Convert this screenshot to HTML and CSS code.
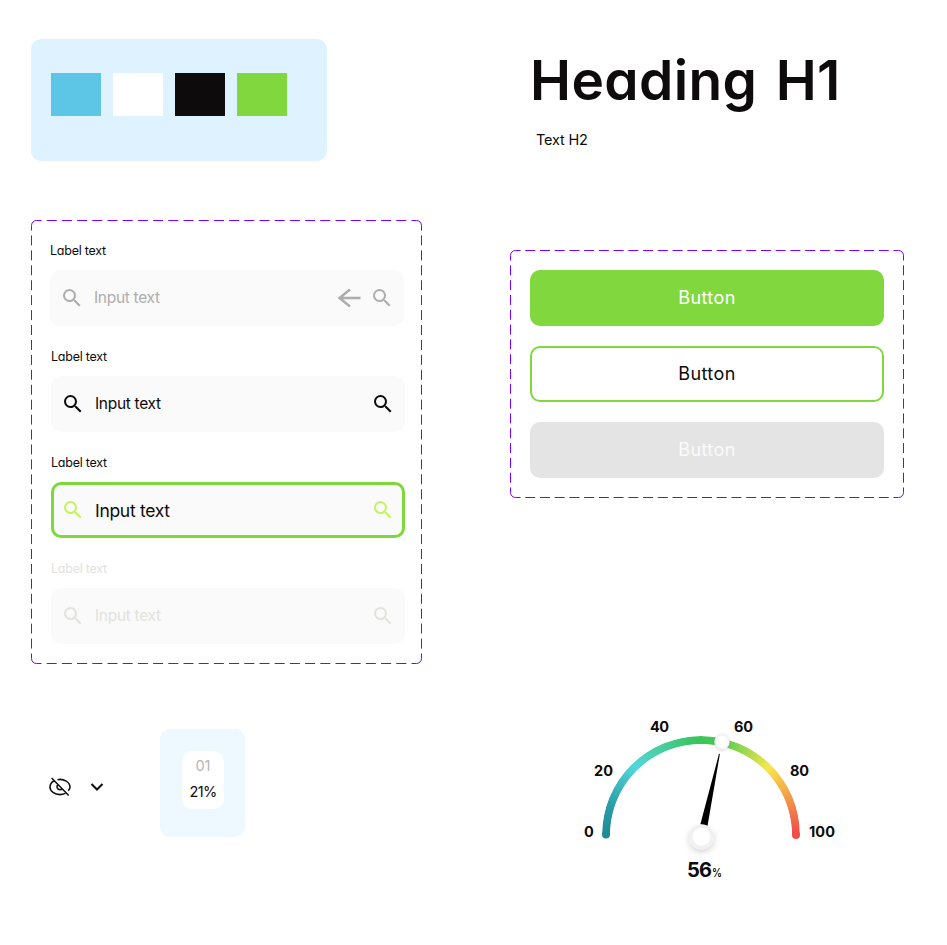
FILE: index.html
```html
<!DOCTYPE html>
<html lang="en">
<head>
<meta charset="utf-8">
<title>UI kit</title>
<link rel="stylesheet" href="styles.css">
</head>
<body>
<svg width="0" height="0" class="defs">
  <symbol id="search" viewBox="0 0 24 24"><path d="M15.5 14h-.79l-.28-.27A6.47 6.47 0 0 0 16 9.5 6.5 6.5 0 1 0 9.5 16c1.61 0 3.09-.59 4.23-1.57l.27.28v.79l5 4.99L20.49 19l-4.99-5zm-6 0C7.01 14 5 11.99 5 9.5S7.01 5 9.5 5 14 7.01 14 9.5 11.99 14 9.5 14z" fill="currentColor"/></symbol>
</svg>
<main class="page">
  <div class="col-left">
    <section class="palette">
      <div class="swatch sky"></div><div class="swatch white"></div><div class="swatch black"></div><div class="swatch green"></div>
    </section>
    <section class="panel inputs">
      <svg class="frame" width="391" height="444" fill="none">
        <path d="M5.5 .5H385.5M5.5 443.5H385.5" stroke-dasharray="10 5.2" stroke-dashoffset="5"/>
        <path d="M.5 5.5V438.5M390.5 5.5V438.5" stroke-dasharray="10 4.931" stroke-dashoffset="5"/>
        <path d="M.5 5.5a5 5 0 0 1 5-5M385.5 .5a5 5 0 0 1 5 5M390.5 438.5a5 5 0 0 1-5 5M5.5 443.5a5 5 0 0 1-5-5"/>
      </svg>
      <div class="field placeholder">
        <label>Label text</label>
        <div class="box"><svg class="ico"><use href="#search"/></svg><span>Input text</span>
          <svg class="arrow" viewBox="0 0 24 20" fill="none" stroke="currentColor" stroke-width="2.500"><path d="M23.500 10H2.500M13 1.500L2.500 10 13 18.500"/></svg>
          <svg class="ico"><use href="#search"/></svg></div>
      </div>
      <div class="field">
        <label>Label text</label>
        <div class="box"><svg class="ico"><use href="#search"/></svg><span>Input text</span><svg class="ico"><use href="#search"/></svg></div>
      </div>
      <div class="field focused">
        <label>Label text</label>
        <div class="box"><svg class="ico"><use href="#search"/></svg><span>Input text</span><svg class="ico"><use href="#search"/></svg></div>
      </div>
      <div class="field disabled">
        <label>Label text</label>
        <div class="box"><svg class="ico"><use href="#search"/></svg><span>Input text</span><svg class="ico"><use href="#search"/></svg></div>
      </div>
    </section>
    <section class="extras">
      <svg class="eye" width="24" height="24" viewBox="0 0 24 24" fill="none" stroke="#111" stroke-width="1.600"><path d="M3.600 3L20.700 20.500M9.500 4.700C16 3.300 22 7.500 22 12c0 1.500-.7 2.700-1.700 3.800M5.800 6C3.500 7.400 2 9.600 2 12c0 4.300 4.600 7.600 10 7.600 2 0 3.800-.5 5.300-1.200M9.800 9.500c-2 2.300-.3 5.200 2.200 5.200 1 0 1.800-.4 2.400-1"/></svg>
      <svg class="chev" width="14" height="10" viewBox="0 0 14 10" fill="none" stroke="#111" stroke-width="2.100"><path d="M1.500 2L7 7.500 12.500 2"/></svg>
      <div class="stat"><div class="stat-in"><span class="no">01</span><span class="pct">21%</span></div></div>
    </section>
  </div>
  <div class="col-right">
    <h1>Heading H1</h1>
    <h2>Text H2</h2>
    <section class="panel buttons">
      <svg class="frame" width="394" height="248" fill="none">
        <path d="M5.500 .5H388.500M5.500 247.500H388.500" stroke-dasharray="10 4.731" stroke-dashoffset="5"/>
        <path d="M.5 5.500V242.500M393.500 5.500V242.500" stroke-dasharray="10 4.813" stroke-dashoffset="5"/>
        <path d="M.5 5.500a5 5 0 0 1 5-5M388.500 .5a5 5 0 0 1 5 5M393.500 242.500a5 5 0 0 1-5 5M5.500 247.500a5 5 0 0 1-5-5"/>
      </svg>
      <button class="primary">Button</button>
      <button class="outline">Button</button>
      <button class="off">Button</button>
    </section>
    <section class="gauge">
      <div class="arc"></div>
      <svg width="270" height="180" viewBox="575 710 270 180">
        <defs>
          <filter id="sh" x="-50%" y="-50%" width="200%" height="200%"><feDropShadow dx="0" dy="3" stdDeviation="3" flood-color="#000" flood-opacity=".16"/></filter>
          <filter id="sh2" x="-50%" y="-50%" width="200%" height="200%"><feDropShadow dx="0" dy=".5" stdDeviation=".8" flood-color="#000" flood-opacity=".22"/></filter>
          <radialGradient id="knob"><stop offset=".65" stop-color="#fff"/><stop offset="1" stop-color="#eeeef0"/></radialGradient>
        </defs>
        <circle cx="606" cy="834.500" r="4" fill="#1f8b92"/>
        <circle cx="796" cy="835" r="4" fill="#f04f49"/>
        <path d="M719 753.800L719.900 754 707.500 826 700.300 824.500z"/>
        <circle cx="722" cy="742" r="7.700" fill="url(#knob)" filter="url(#sh2)"/>
        <circle cx="701.500" cy="836.700" r="12.500" fill="#f1f1f3" filter="url(#sh)"/>
        <circle cx="701.500" cy="836.700" r="9" fill="#fff"/>
        <g class="ticks">
          <text x="584" y="837" textLength="10">0</text>
          <text x="594" y="776" textLength="19">20</text>
          <text x="650" y="732" textLength="19">40</text>
          <text x="734" y="732" textLength="19">60</text>
          <text x="790" y="776" textLength="19">80</text>
          <text x="809" y="837" textLength="26">100</text>
        </g>
        <text class="value" x="687" y="877" textLength="25">56</text>
        <text class="unit" x="712" y="877" textLength="10" lengthAdjust="spacingAndGlyphs">%</text>
      </svg>
    </section>
  </div>
</main>
</body>
</html>
```
FILE: styles.css
```css
* { box-sizing: border-box; margin: 0; padding: 0; }
body { background: #fff; color: #0d0b0c; font-family: Inter, "Liberation Sans", sans-serif; font-feature-settings: "cv11"; }
.defs { display: block; }
.page { display: grid; grid-template-columns: 479px 394px; padding-left: 31px; height: 945px; overflow: hidden; }
.col-left { padding-top: 39px; }
.palette { width: 296px; height: 122px; border-radius: 10px; background: #def2ff; padding: 34px 20px; display: flex; gap: 12px; }
.swatch { width: 50px; height: 42.8px; }
.sky { background: #5dc5e5; }
.white { background: #fff; }
.black { background: #0d0b0c; }
.green { background: #80d83e; }
.panel { position: relative; }
.frame { position: absolute; left: 0; top: 0; stroke: #7b00ff; }
.inputs { margin-top: 59px; width: 391px; height: 444px; padding: 20px 17px 0 20px; display: flex; flex-direction: column; gap: 20px; }
.field { width: 354px; height: 86px; }
.placeholder { margin-left: -1px; }
.field label { display: block; height: 30px; line-height: 22px; font-size: 12.5px; letter-spacing: -.25px; }
.box { height: 56px; border-radius: 10px; background: #fafafa; padding: 0 10px; display: flex; align-items: center; }
.box span { flex: 1; margin-left: 10px; padding-bottom: 2px; font-size: 15.5px; letter-spacing: -.3px; }
.ico { width: 24px; height: 24px; }
.arrow { width: 24px; height: 20px; margin-right: 9px; }
.placeholder .box { color: #adadad; }
.focused .box { border: 3px solid #7dd83c; padding: 0 7px; }
.focused .ico { color: #c3f55a; }
.focused span { font-size: 17.5px; padding-bottom: 0; letter-spacing: -.3px; }
.disabled { color: #e2e2de; }
.extras { margin-top: 65px; display: flex; align-items: flex-start; }
.eye { margin: 46px 0 0 17px; }
.chev { margin: 53px 0 0 18px; }
.stat { margin-left: 56px; width: 85px; height: 108px; border-radius: 10px; background: #edf8ff; padding: 22px; }
.stat-in { width: 42px; height: 58px; border-radius: 10px; background: #fff; display: flex; flex-direction: column; align-items: center; padding-top: 2px; font-size: 14.5px; }
.stat-in span { height: 26px; line-height: 26px; }
.no { color: #b5b5b5; }
.pct { letter-spacing: -.7px; }
h1 { margin: 47px 0 0 20px; height: 67px; line-height: 67px; font-size: 55px; font-weight: 600; letter-spacing: .4px; word-spacing: 4px; white-space: nowrap; }
h2 { margin: 15px 0 0 26px; height: 22px; line-height: 22px; font-size: 14.5px; font-weight: 400; letter-spacing: -.2px; }
.buttons { margin-top: 99px; height: 248px; padding: 20px; display: flex; flex-direction: column; gap: 20px; }
button { height: 56px; border: 0; border-radius: 10px; font: inherit; font-size: 18px; letter-spacing: .4px; color: #fff; padding-bottom: 2px; }
.primary { background: #80d83e; }
.outline { background: #fff; border: 2px solid #80d83e; color: #0d0b0c; }
.off { background: #e4e4e4; color: #fafafa; }
.gauge { position: relative; margin: 212px 0 0 65px; width: 270px; height: 180px; }
.gauge svg { position: relative; display: block; }
.arc { position: absolute; left: 27px; top: 26px; width: 198px; height: 99px; overflow: hidden; border-radius: 99px 99px 0 0; background: conic-gradient(from 270deg at 50% 100%, #1f8b92 0deg, #2a9da6 18deg, #54d6dc 46deg, #39c459 88deg, #4dcb55 102deg, #f8e74a 135deg, #f04f49 178deg); -webkit-mask: radial-gradient(circle at 50% 100%, transparent 90.600px, #000 91.400px); mask: radial-gradient(circle at 50% 100%, transparent 90.600px, #000 91.400px); }
.ticks { font-size: 14.500px; font-weight: 700; fill: #0d0b0c; }
.value { font-size: 20px; font-weight: 700; fill: #0d0b0c; }
.unit { font-size: 12px; font-weight: 600; fill: #0d0b0c; }
```
